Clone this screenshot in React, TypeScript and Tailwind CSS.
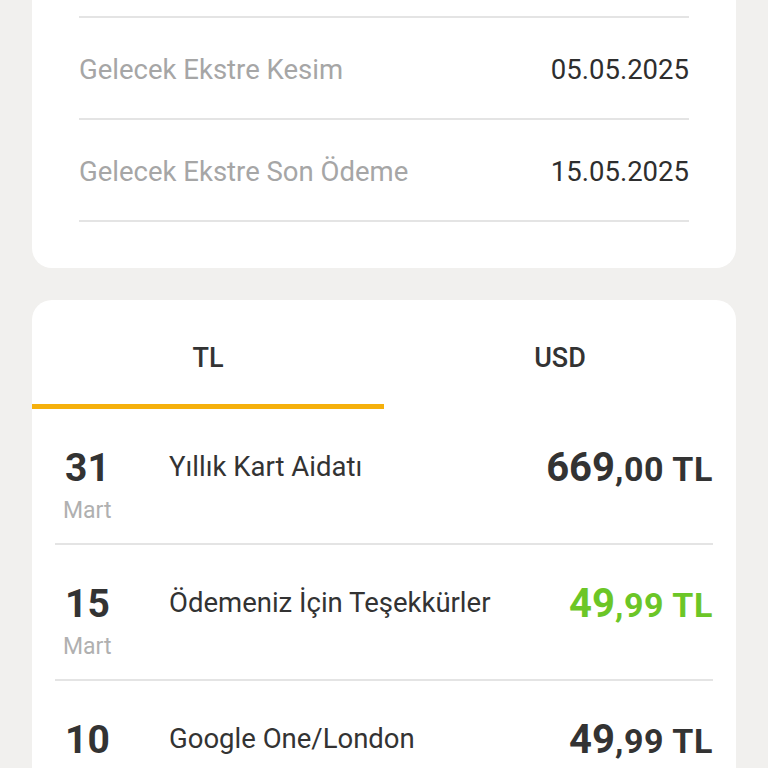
import React from 'react';

type Txn = {
  day: string;
  month: string;
  title: string;
  whole: string;
  cents: string;
  credit?: boolean;
};

const INFO = [
  { label: 'Gelecek Ekstre Kesim', value: '05.05.2025' },
  { label: 'Gelecek Ekstre Son Ödeme', value: '15.05.2025' },
];

const TXNS: Txn[] = [
  { day: '31', month: 'Mart', title: 'Yıllık Kart Aidatı', whole: '669', cents: ',00 TL' },
  { day: '15', month: 'Mart', title: 'Ödemeniz İçin Teşekkürler', whole: '49', cents: ',99 TL', credit: true },
  { day: '10', month: 'Mart', title: 'Google One/London', whole: '49', cents: ',99 TL' },
];

function InfoCard() {
  return (
    <div className="mx-[32px] rounded-b-[20px] bg-white px-[47px] pt-[16px] pb-[46px]">
      <div className="border-t-2 border-[#e4e4e4]" />
      {INFO.map((row) => (
        <div key={row.label} className="flex h-[102px] items-center justify-between border-b-2 border-[#e4e4e4] pt-[4px]">
          <span className="text-[27.5px] text-[#a6a6a6]">{row.label}</span>
          <span className="text-[27.5px] text-[#2e2e2e]">{row.value}</span>
        </div>
      ))}
    </div>
  );
}

function TxnRow({ t }: { t: Txn }) {
  return (
    <div className="flex h-[136px] border-b-2 border-[#e4e4e4] pt-[35px]">
      <div className="flex w-[114px] flex-col pl-[10px]">
        <span className="text-[39px] leading-[48px] font-bold text-[#333]">{t.day}</span>
        <span className="-ml-[2px] mt-[4px] text-[23px] leading-[30px] text-[#b0b0b0]">{t.month}</span>
      </div>
      <div className="flex-1 pt-[6px] text-[27.5px] leading-[34px] text-[#333]">{t.title}</div>
      <div
        className={`flex items-baseline pt-[1px] font-bold leading-[46px] ${t.credit ? 'text-[#6cc627]' : 'text-[#333]'}`}
      >
        <span className="text-[40px]">{t.whole}</span>
        <span className="text-[34px] tracking-[0.6px]">{t.cents}</span>
      </div>
    </div>
  );
}

function TxnCard() {
  return (
    <div className="mx-[32px] mt-[32px] rounded-[20px] bg-white">
      <div className="flex">
        <div className="flex flex-1 flex-col">
          <div className="flex h-[104px] items-center justify-center pt-[12px] text-[27px] font-medium text-[#333]">TL</div>
          <div className="h-[5px] bg-[#f5b00c]" />
        </div>
        <div className="flex flex-1 flex-col">
          <div className="flex h-[104px] items-center justify-center pt-[12px] text-[27px] font-medium text-[#333]">USD</div>
          <div className="h-[5px]" />
        </div>
      </div>
      <div className="px-[23px]">
        {TXNS.map((t) => (
          <TxnRow key={t.day + t.title} t={t} />
        ))}
      </div>
    </div>
  );
}

export default function App() {
  return (
    <div className="h-[768px] overflow-hidden bg-[#f1f0ee]" style={{ fontFamily: 'Roboto, "Noto Sans", sans-serif' }}>
      <InfoCard />
      <TxnCard />
    </div>
  );
}
